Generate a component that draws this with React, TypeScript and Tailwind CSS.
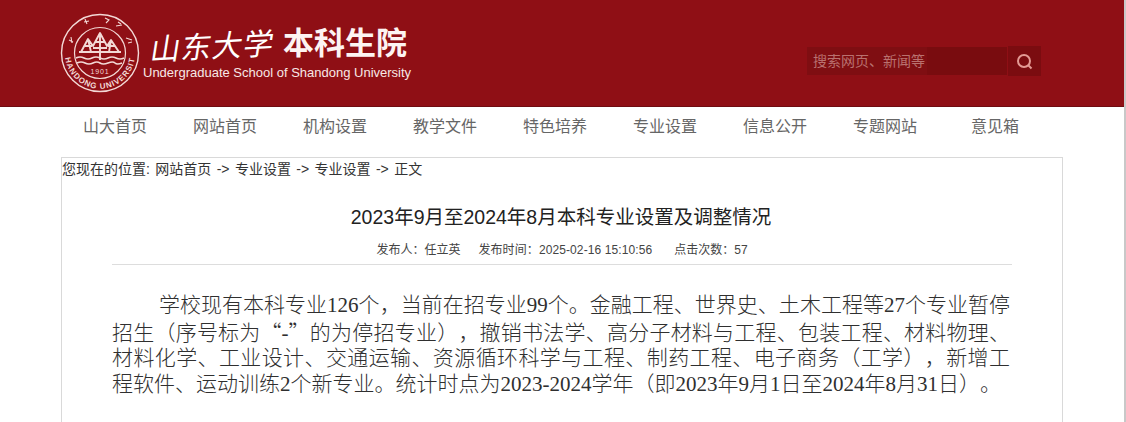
const navItems = [
  "山大首页",
  "网站首页",
  "机构设置",
  "教学文件",
  "特色培养",
  "专业设置",
  "信息公开",
  "专题网站",
  "意见箱",
];

const sans = "font-['Liberation_Sans','Noto_Sans_CJK_SC',sans-serif]";
const cjk = "font-['Noto_Sans_CJK_SC',sans-serif]";

function Seal() {
  return (
    <svg width="80" height="80" viewBox="0 0 80 80" fill="none" stroke="#f3d9d6">
      <circle cx="40" cy="40" r="38.5" strokeWidth="1.4" />
      <circle cx="40" cy="40" r="25.5" strokeWidth="1.2" />
      <path id="seal-arc" d="M5.4 46 A35 35 0 0 0 74.6 46" stroke="none" />
      <text fontSize="8" fontWeight="700" fill="#f3d9d6" stroke="none" fontFamily="Liberation Sans, sans-serif" letterSpacing="0.9">
        <textPath href="#seal-arc" startOffset="50%" textAnchor="middle">
          SHANDONG UNIVERSITY
        </textPath>
      </text>
      {/* small calligraphic marks on the top of the ring */}
      <path d="M25 6l2 5M24 9l5-1M45 5l4 2-3 3M58 9l3 2M56 13l6-1M9 27l4 2M11 24l1 6M66 25l6 2M68 30l4-1" strokeWidth="1.1" />
      {/* mountains */}
      <path
        d="M21 39L28 26l5 7 7-13 7 13 4-6 8 12M28 26l3 13M25 33h7M40 20v27M35 29h10M33 35h14M48 33h7M51 27l-2 12M19 39h42"
        strokeWidth="1.9"
        strokeLinejoin="round"
      />
      {/* water */}
      <path d="M16 45q4-2 8 0t8 0 8 0 8 0 8 0 8 0M17 50q4-2 8 0t8 0 7 0 8 0 7 0 7 0" strokeWidth="1.6" />
      <text x="40" y="61" textAnchor="middle" fontSize="7" fill="#f3d9d6" stroke="none" fontFamily="Liberation Sans, sans-serif" letterSpacing="0.8">
        1901
      </text>
    </svg>
  );
}

function Header() {
  return (
    <header className="flex h-[107px] items-center border-b border-[#6f0c11] bg-[#8f0f15] pl-[60px] pr-[83px]">
      <Seal />
      <div className="ml-[3px] mt-[1px] flex w-[270px] flex-col">
        <div className="flex items-center pl-[8px]">
          <span className={`${cjk} w-[132px] -skew-x-12 -rotate-3 text-[30px] font-normal leading-[36px] tracking-[1px] text-white`}>
            山东大学
          </span>
          <span className={`${sans} text-[31px] font-bold leading-[36px] text-[#fdf3f2]`}>本科生院</span>
        </div>
        <span className={`${sans} mt-[3px] whitespace-nowrap text-[13px] leading-[16px] text-[#f8e8e6]`}>
          Undergraduate School of Shandong University
        </span>
      </div>
      <div className="ml-auto mt-[16px] flex items-center gap-[1px]">
        <div className={`${sans} flex h-[28px] w-[200px] bg-[#790c0f] text-[14px] text-[#b9716f]`}>
          <span className="flex h-full w-[120px] items-center bg-[#7f0e12] pl-[6px]">搜索网页、新闻等</span>
        </div>
        <div className="flex h-[30px] w-[33px] items-center justify-center bg-[#7b0c10]">
          <svg width="17" height="17" viewBox="0 0 17 17" fill="none" stroke="#e39a94" strokeWidth="2">
            <circle cx="8" cy="8" r="6" />
            <path d="M12.5 12.5l3 3" />
          </svg>
        </div>
      </div>
    </header>
  );
}

function Nav() {
  return (
    <nav className="flex h-[50px] items-start pl-[60px]">
      {navItems.map((item) => (
        <a key={item} className={`${sans} w-[110px] pt-[9px] text-center text-[16px] leading-[22px] text-[#666666]`}>
          {item}
        </a>
      ))}
    </nav>
  );
}

export default function App() {
  return (
    <div className={`${sans} h-[422px] w-[1126px] overflow-hidden border-r-2 border-[#c8c8c8] bg-white`}>
      <Header />
      <Nav />
      <main className="ml-[61px] h-[300px] w-[1002px] border border-b-0 border-[#d9d9d9]">
        <div className="h-[22px] text-[14px] leading-[22px] text-[#333333] [word-spacing:1.5px]">
          您现在的位置: 网站首页 -&gt; 专业设置 -&gt; 专业设置 -&gt; 正文
        </div>
        <h1 className="mt-[25px] pr-[2px] text-center text-[19.5px] leading-[24px] text-[#222222]">
          2023年9月至2024年8月本科专业设置及调整情况
        </h1>
        <div className="mx-[50px] mt-[8px] flex h-[28px] items-center justify-center gap-[18px] border-b border-[#dddddd] pb-[2px] text-[12px] text-[#444444]">
          <span>发布人：任立英</span>
          <span className="tracking-[0.1px]">发布时间：2025-02-16 15:10:56</span>
          <span className="ml-[4px]">点击次数：57</span>
        </div>
        <p className="ml-[50px] mt-[28px] w-[898px] text-justify indent-[47px] font-['Liberation_Serif','Noto_Sans_CJK_SC',serif] text-[21px] font-light leading-[25.7px] text-[#2f2f2f] [text-spacing-trim:space-all]">
          学校现有本科专业126个，当前在招专业99个。金融工程、世界史、土木工程等27个专业暂停招生（序号标为<span className={cjk}>“</span>-<span className={cjk}>”</span>的为停招专业），撤销书法学、高分子材料与工程、包装工程、材料物理、材料化学、工业设计、交通运输、资源循环科学与工程、制药工程、电子商务（工学），新增工程软件、运动训练2个新专业。统计时点为2023-2024学年（即2023年9月1日至2024年8月31日）。
        </p>
      </main>
    </div>
  );
}
